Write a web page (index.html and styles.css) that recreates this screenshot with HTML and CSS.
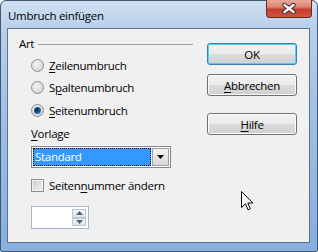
FILE: index.html
```html
<!DOCTYPE html>
<html lang="de">
<head>
  <meta charset="UTF-8" />
  <title>Umbruch einfügen</title>
  <link rel="stylesheet" href="styles.css">
</head>
<body>
  <div class="window">
    <div class="titlebar">
      <span class="title">Umbruch einfügen</span>
      <span class="close">
        <svg width="14" height="11" viewBox="0 0 14 11">
          <path d="M2.5 2 L11.5 9 M11.5 2 L2.5 9" stroke="#3a2a2a" stroke-width="4.4" stroke-linecap="round"/>
          <path d="M2.5 2 L11.5 9 M11.5 2 L2.5 9" stroke="#fff" stroke-width="2.4" stroke-linecap="round"/>
        </svg>
      </span>
    </div>

    <div class="client">
      <div class="left">
        <div class="fixedline"><span>Art</span></div>

        <div class="radio first"><span class="dot"></span><span><u>Z</u>eilenumbruch</span></div>
        <div class="radio"><span class="dot"></span><span>S<u>p</u>altenumbruch</span></div>
        <div class="radio"><span class="dot checked"></span><span><u>S</u>eitenumbruch</span></div>

        <div class="field-label"><u>V</u>orlage</div>
        <div class="select">
          <span class="select-value"><span class="focus">Standard</span></span>
          <span class="select-btn">
            <svg width="7" height="4" viewBox="0 0 7 4"><path d="M0 0 H7 L3.5 4 Z" fill="#000"/></svg>
          </span>
        </div>

        <div class="check"><span class="box"></span><span>Seiten<u>n</u>ummer ändern</span></div>

        <div class="spin">
          <span class="spin-field"></span>
          <span class="spin-btns">
            <span class="spin-btn"><svg width="7" height="4" viewBox="0 0 7 4"><path d="M0 4 H7 L3.5 0 Z" fill="#4d6185"/></svg></span>
            <span class="spin-btn"><svg width="7" height="4" viewBox="0 0 7 4"><path d="M0 0 H7 L3.5 4 Z" fill="#4d6185"/></svg></span>
          </span>
        </div>
      </div>

      <div class="right">
        <div class="btn default">OK</div>
        <div class="btn"><u>A</u>bbrechen</div>
        <div class="btn help"><u>H</u>ilfe</div>
      </div>

      <svg class="cursor" width="13" height="20" viewBox="0 0 13 20">
        <path d="M0.5 0.5 V16.5 L4.5 12.8 L7 18.8 L9.3 17.8 L6.8 12 H11.8 Z" fill="#fff" stroke="#000" stroke-width="1" stroke-linejoin="miter"/>
      </svg>
    </div>
  </div>
</body>
</html>
```

FILE: styles.css
```css
body {
  margin: 0;
  background: #fff;
  font-family: 'Open Sans', 'Noto Sans', sans-serif;
  font-size: 11.5px;
  letter-spacing: -0.3px;
  color: #000;
}

u {
  text-decoration: underline;
  text-underline-offset: 2px;
}

.window {
  width: 318px;
  height: 252px;
  box-sizing: border-box;
  border: 1px solid #3f5877;
  border-radius: 6px 6px 2px 2px;
  background: linear-gradient(to bottom, #cfe0f2 0%, #b7cfea 12%, #a3c2e5 40%, #86afdd 100%);
  padding: 0 7px 8px 6px;
  display: flex;
  flex-direction: column;
}

.titlebar {
  height: 27px;
  display: flex;
  align-items: flex-start;
  justify-content: space-between;
}

.title {
  margin: 7px 0 0 1px;
  font-size: 11.5px;
  color: #000;
}

.close {
  width: 46px;
  height: 18px;
  margin-top: -1px;
  margin-right: -2px;
  box-sizing: border-box;
  border: 1px solid #6a2a22;
  border-top: none;
  border-radius: 0 0 4px 4px;
  background: linear-gradient(to bottom, #e8a999 0%, #db8676 40%, #c2402d 55%, #d0533f 100%);
  display: flex;
  align-items: center;
  justify-content: center;
}

.client {
  position: relative;
  flex: 1;
  border: 1px solid #5f7189;
  background: #f0f0f0;
  display: flex;
}

.left {
  width: 175px;
  box-sizing: border-box;
  padding: 7px 0 0 23px;
}

.fixedline {
  margin: 0 -10px 0 -12px;
  display: flex;
  align-items: center;
  gap: 4px;
  height: 15px;
}

.fixedline::after {
  content: "";
  flex: 1;
  border-top: 1px solid #a0a0a0;
  margin-top: 1px;
}

.radio, .check {
  display: flex;
  align-items: center;
  gap: 5px;
  height: 22.5px;
}

.radio.first {
  margin-top: 3px;
}

.dot {
  width: 11px;
  height: 11px;
  border: 1px solid #8e8f8f;
  border-radius: 50%;
  background: radial-gradient(circle at 40% 35%, #f4f4f4 0%, #dcdcdc 60%, #c9c9c9 100%);
  position: relative;
}

.dot.checked::after {
  content: "";
  position: absolute;
  left: 2px;
  top: 2px;
  width: 7px;
  height: 7px;
  border-radius: 50%;
  background: radial-gradient(circle at 40% 40%, #0c2d4e 0%, #1a5c9a 55%, #5aa6e2 100%);
}

.field-label {
  margin-top: 4.5px;
  height: 16px;
  line-height: 16px;
}

.select {
  margin-top: 4px;
  width: 140px;
  height: 22px;
  box-sizing: border-box;
  border: 1px solid #828790;
  background: #fff;
  display: flex;
  padding: 1px;
}

.select-value {
  flex: 1;
  background: #3399ff;
  color: #fff;
  display: flex;
}

.focus {
  flex: 1;
  border: 1px dotted #000;
  padding-left: 1px;
  line-height: 16px;
}

.select-btn {
  width: 17px;
  margin-left: 1px;
  box-sizing: border-box;
  border: 1px solid #a0a0a0;
  background: linear-gradient(to bottom, #f2f2f2, #d8d8d8);
  display: flex;
  align-items: center;
  justify-content: center;
}

.check {
  margin-top: 6px;
  height: 22px;
}

.box {
  width: 11px;
  height: 11px;
  border: 1px solid #8e8f8f;
  background: linear-gradient(135deg, #cbcbcb, #f4f4f4);
  box-shadow: inset 0 0 0 1px #f4f4f4;
}

.spin {
  margin-top: 10px;
  width: 58px;
  height: 23px;
  box-sizing: border-box;
  border: 1px solid #a7b8cc;
  background: #fff;
  display: flex;
  padding: 2px;
}

.spin-field {
  flex: 1;
}

.spin-btns {
  width: 14px;
  display: flex;
  flex-direction: column;
}

.spin-btn {
  flex: 1;
  border: 1px solid #bac7d6;
  background: linear-gradient(to bottom, #f6f6f6, #e2e2e2);
  display: flex;
  align-items: center;
  justify-content: center;
}

.right {
  flex: 1;
  padding: 14px 12px 0 24px;
  display: flex;
  flex-direction: column;
  gap: 9px;
}

.btn {
  height: 22px;
  box-sizing: border-box;
  border: 1px solid #707070;
  border-radius: 3px;
  background: linear-gradient(to bottom, #f2f2f2 0%, #ebebeb 50%, #dddddd 50%, #cfcfcf 100%);
  box-shadow: inset 0 0 0 1px #fcfcfc;
  display: flex;
  align-items: center;
  justify-content: center;
}

.btn.default {
  border-color: #3c7fb1;
  box-shadow: inset 0 0 0 1px #48d4f4;
}

.btn.help {
  margin-top: 8px;
}

.cursor {
  position: absolute;
  left: 233px;
  top: 162px;
}
```
